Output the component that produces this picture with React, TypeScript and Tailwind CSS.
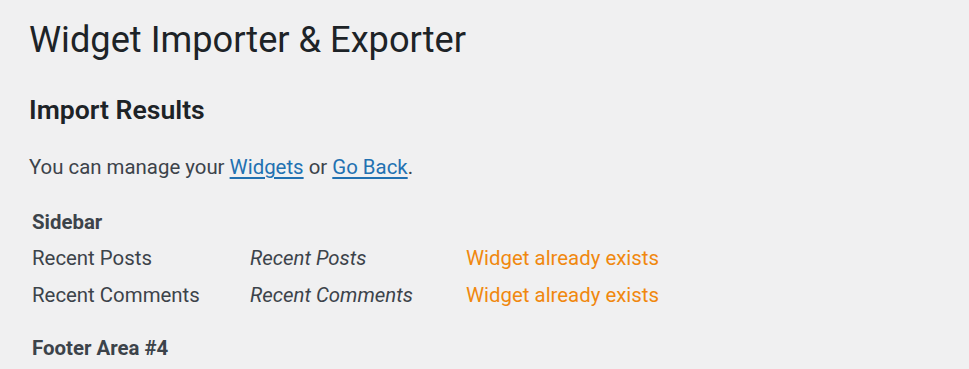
import React from "react";

export default function App() {
  const rows = [
    ["Recent Posts", "Recent Posts", "Widget already exists"],
    ["Recent Comments", "Recent Comments", "Widget already exists"],
  ];
  return (
    <div
      className="w-[969px] h-[369px] overflow-hidden bg-[#f0f0f1] pl-[29px] text-[#3c434a]"
      style={{ fontFamily: "Roboto, 'Noto Sans', sans-serif" }}
    >
      <h1 className="pt-[17px] text-[36.2px] leading-[45px] font-normal text-[#1d2327]">
        Widget Importer &amp; Exporter
      </h1>
      <h2 className="mt-[31px] text-[26.6px] leading-[34px] font-semibold text-[#1d2327]">
        Import Results
      </h2>
      <p className="mt-[26px] text-[20.4px] leading-[28px]">
        You can manage your{" "}
        <a href="#" className="text-[#2271b1] underline underline-offset-[3px]">
          Widgets
        </a>{" "}
        or{" "}
        <a href="#" className="text-[#2271b1] underline underline-offset-[3px]">
          Go Back
        </a>
        .
      </p>
      <div className="mt-[27px] ml-[3px] text-[20.4px]">
        <div className="font-bold leading-[28px]">Sidebar</div>
        <div className="mt-[8px] grid grid-cols-[218px_216px_auto] gap-y-[9px] leading-[28px]">
          {rows.map((r, i) => (
            <React.Fragment key={i}>
              <div>{r[0]}</div>
              <div className="italic">{r[1]}</div>
              <div className="text-[#f0880f]">{r[2]}</div>
            </React.Fragment>
          ))}
        </div>
        <div className="mt-[25px] font-bold leading-[28px]">Footer Area #4</div>
      </div>
    </div>
  );
}
